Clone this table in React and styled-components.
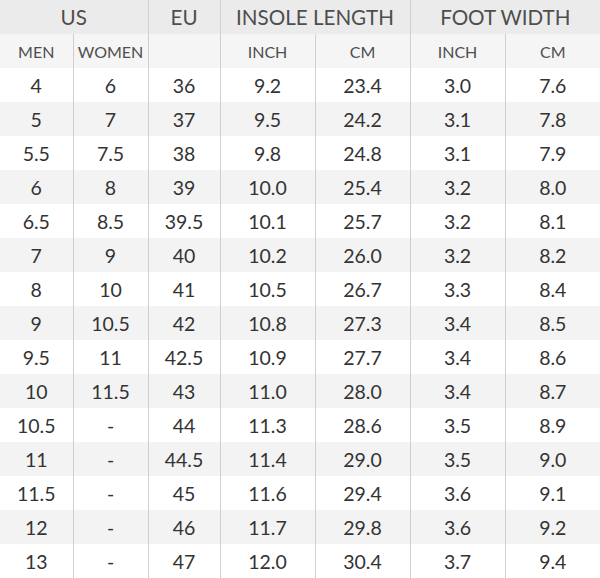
import React from "react";
import styled, { createGlobalStyle } from "styled-components";

const GlobalStyle = createGlobalStyle`
  html, body {
    margin: 0;
    padding: 0;
    background: #fff;
  }
  body {
    font-family: Lato, "Open Sans", sans-serif;
  }
`;

const STable = styled.table`
  width: 600px;
  border-collapse: collapse;
  table-layout: fixed;
  text-align: center;
`;

const SGroupRow = styled.tr`
  background: #ebebeb;
  height: 34px;
`;

const SGroupTh = styled.th`
  font-weight: 400;
  font-size: 20.6px;
  color: #4e4e4e;
  padding: 0;
  border-left: ${(p) => (p.$first ? "none" : "1px solid #cfcfcf")};
`;

const SUnitRow = styled.tr`
  background: #f5f5f5;
  height: 34px;
`;

const SUnitTh = styled.th`
  font-weight: 400;
  font-size: 16px;
  color: #4e4e4e;
  padding: 0;
  border-left: ${(p) => (p.$first ? "none" : "1px solid #cfcfcf")};
`;

const SDataRow = styled.tr`
  background: ${(p) => (p.$odd ? "#f3f3f3" : "#fff")};
  height: 34px;
`;

const SCell = styled.td`
  font-size: 19.5px;
  color: #333;
  padding: 0;
  border-left: ${(p) => (p.$first ? "none" : "1px solid #cfcfcf")};
`;

const rows = [
  ["4", "6", "36", "9.2", "23.4", "3.0", "7.6"],
  ["5", "7", "37", "9.5", "24.2", "3.1", "7.8"],
  ["5.5", "7.5", "38", "9.8", "24.8", "3.1", "7.9"],
  ["6", "8", "39", "10.0", "25.4", "3.2", "8.0"],
  ["6.5", "8.5", "39.5", "10.1", "25.7", "3.2", "8.1"],
  ["7", "9", "40", "10.2", "26.0", "3.2", "8.2"],
  ["8", "10", "41", "10.5", "26.7", "3.3", "8.4"],
  ["9", "10.5", "42", "10.8", "27.3", "3.4", "8.5"],
  ["9.5", "11", "42.5", "10.9", "27.7", "3.4", "8.6"],
  ["10", "11.5", "43", "11.0", "28.0", "3.4", "8.7"],
  ["10.5", "-", "44", "11.3", "28.6", "3.5", "8.9"],
  ["11", "-", "44.5", "11.4", "29.0", "3.5", "9.0"],
  ["11.5", "-", "45", "11.6", "29.4", "3.6", "9.1"],
  ["12", "-", "46", "11.7", "29.8", "3.6", "9.2"],
  ["13", "-", "47", "12.0", "30.4", "3.7", "9.4"],
];

function App() {
  return (
    <>
      <GlobalStyle />
      <STable>
        <colgroup>
          <col style={{ width: 73 }} />
          <col style={{ width: 75 }} />
          <col style={{ width: 72 }} />
          <col style={{ width: 95 }} />
          <col style={{ width: 95 }} />
          <col style={{ width: 95 }} />
          <col style={{ width: 95 }} />
        </colgroup>
        <thead>
          <SGroupRow>
            <SGroupTh $first colSpan={2}>US</SGroupTh>
            <SGroupTh>EU</SGroupTh>
            <SGroupTh colSpan={2}>INSOLE LENGTH</SGroupTh>
            <SGroupTh colSpan={2}>FOOT WIDTH</SGroupTh>
          </SGroupRow>
          <SUnitRow>
            <SUnitTh $first>MEN</SUnitTh>
            <SUnitTh>WOMEN</SUnitTh>
            <SUnitTh></SUnitTh>
            <SUnitTh>INCH</SUnitTh>
            <SUnitTh>CM</SUnitTh>
            <SUnitTh>INCH</SUnitTh>
            <SUnitTh>CM</SUnitTh>
          </SUnitRow>
        </thead>
        <tbody>
          {rows.map((r, i) => (
            <SDataRow key={i} $odd={i % 2 === 1}>
              {r.map((v, j) => (
                <SCell key={j} $first={j === 0}>{v}</SCell>
              ))}
            </SDataRow>
          ))}
        </tbody>
      </STable>
    </>
  );
}

export default App;
